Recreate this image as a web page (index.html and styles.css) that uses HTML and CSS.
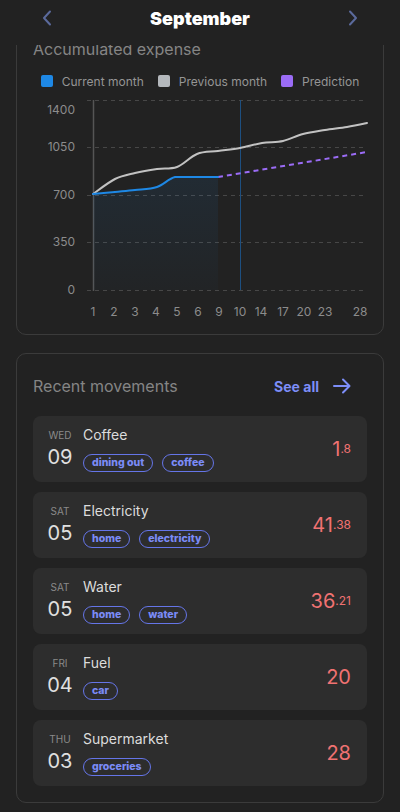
FILE: index.html
```html
<!DOCTYPE html>
<html lang="en">
  <head>
    <meta charset="UTF-8" />
    <meta name="viewport" content="width=device-width, initial-scale=1.0" />
    <title>Expenses - September</title>
    <link rel="stylesheet" href="styles.css">
  </head>
  <body>
    <header class="month-bar">
      <button class="month-bar__nav" aria-label="Previous month">
        <svg width="14" height="16" viewBox="0 0 14 16"><path d="M10 1.5 L4 8 L10 14.5" fill="none" stroke="currentColor" stroke-width="2" stroke-linecap="round" stroke-linejoin="round"/></svg>
      </button>
      <h1 class="month-bar__title">September</h1>
      <button class="month-bar__nav" aria-label="Next month">
        <svg width="14" height="16" viewBox="0 0 14 16"><path d="M4 1.5 L10 8 L4 14.5" fill="none" stroke="currentColor" stroke-width="2" stroke-linecap="round" stroke-linejoin="round"/></svg>
      </button>
    </header>

    <main class="content">
      <section class="card chart-card">
        <h2 class="card__title">Accumulated expense</h2>
        <ul class="legend">
          <li class="legend__item"><span class="legend__box legend__box--current"></span>Current month</li>
          <li class="legend__item"><span class="legend__box legend__box--previous"></span>Previous month</li>
          <li class="legend__item"><span class="legend__box legend__box--prediction"></span>Prediction</li>
        </ul>
        <svg class="chart" width="334" height="227" viewBox="0 0 334 227">
          <defs>
            <linearGradient id="fillCurrent" x1="0" y1="0" x2="0" y2="1">
              <stop offset="0" stop-color="#1e88e5" stop-opacity="0.09" />
              <stop offset="1" stop-color="#1e88e5" stop-opacity="0.02" />
            </linearGradient>
          </defs>
          <!-- grid -->
          <g stroke="#474747" stroke-width="1" stroke-dasharray="4 4">
            <line x1="54" y1="5.5" x2="334" y2="5.5" />
            <line x1="54" y1="52.5" x2="334" y2="52.5" />
            <line x1="54" y1="100.5" x2="334" y2="100.5" />
            <line x1="54" y1="147.5" x2="334" y2="147.5" />
            <line x1="54" y1="195.5" x2="334" y2="195.5" />
          </g>
          <line x1="60.5" y1="5" x2="60.5" y2="196" stroke="#555" stroke-width="1.5" />
          <line x1="207.5" y1="5" x2="207.5" y2="195" stroke="#1d4f80" stroke-width="1" />

          <g class="chart__ylabels" text-anchor="end">
            <text x="42" y="19">1400</text>
            <text x="42" y="56">1050</text>
            <text x="42" y="104">700</text>
            <text x="42" y="151">350</text>
            <text x="42" y="199">0</text>
          </g>
          <g class="chart__xlabels" text-anchor="middle">
            <text x="60" y="221">1</text>
            <text x="81" y="221">2</text>
            <text x="102" y="221">3</text>
            <text x="123" y="221">4</text>
            <text x="144" y="221">5</text>
            <text x="165" y="221">6</text>
            <text x="186" y="221">9</text>
            <text x="207" y="221">10</text>
            <text x="228" y="221">14</text>
            <text x="250" y="221">17</text>
            <text x="271" y="221">20</text>
            <text x="292" y="221">23</text>
            <text x="327" y="221">28</text>
          </g>

          <path d="M60 99 C63.7 98.7 75 97.7 82 97 C89 96.3 95 95.8 102 95 C109 94.2 117.3 94.2 124 92 C130.7 89.8 135.3 83.7 142 82 C148.7 82 157 82 164 82 L185 82 L185 195 L60 195 Z" fill="url(#fillCurrent)" />

          <path d="M60 99 C63.7 96.5 75 87.5 82 84 C89 80.5 95 79.7 102 78 C109 76.3 117 75 124 74 C131 73 137.3 74.5 144 72 C150.7 69.5 157.2 61.7 164 59 C170.8 56.3 177.8 57 185 56 C192.2 55 199.7 54.3 207 53 C214.3 51.7 221.8 49.2 229 48 C236.2 46.8 243.2 47.5 250 46 C256.8 44.5 263 40.8 270 39 C277 37.2 284.7 36.2 292 35 C299.3 33.8 307 33.2 314 32 C321 30.8 330.7 28.7 334 28" fill="none" stroke="#c2c2c2" stroke-width="2" stroke-linecap="round" />

          <path d="M185 82 L334 57" fill="none" stroke="#9b6cf6" stroke-width="2" stroke-dasharray="5 4" />

          <path d="M60 99 C63.7 98.7 75 97.7 82 97 C89 96.3 95 95.8 102 95 C109 94.2 117.3 94.2 124 92 C130.7 89.8 135.3 83.7 142 82 C148.7 82 157 82 164 82 L185 82" fill="none" stroke="#1e88e5" stroke-width="2" stroke-linecap="round" />
        </svg>
      </section>

      <section class="card movements">
        <div class="movements__head">
          <h2 class="card__title">Recent movements</h2>
          <a class="see-all" href="#">See all
            <svg width="18" height="16" viewBox="0 0 18 16"><path d="M1 8 H16 M10 1.5 L16.5 8 L10 14.5" fill="none" stroke="currentColor" stroke-width="2" stroke-linecap="round" stroke-linejoin="round"/></svg>
          </a>
        </div>

        <ul class="movements__list">
          <li class="movement">
            <div class="movement__date"><span class="movement__day">WED</span><span class="movement__num">09</span></div>
            <div class="movement__info">
              <p class="movement__name">Coffee</p>
              <div class="movement__tags"><span class="tag">dining out</span><span class="tag">coffee</span></div>
            </div>
            <p class="movement__amount">1<small>.8</small></p>
          </li>
          <li class="movement">
            <div class="movement__date"><span class="movement__day">SAT</span><span class="movement__num">05</span></div>
            <div class="movement__info">
              <p class="movement__name">Electricity</p>
              <div class="movement__tags"><span class="tag">home</span><span class="tag">electricity</span></div>
            </div>
            <p class="movement__amount">41<small>.38</small></p>
          </li>
          <li class="movement">
            <div class="movement__date"><span class="movement__day">SAT</span><span class="movement__num">05</span></div>
            <div class="movement__info">
              <p class="movement__name">Water</p>
              <div class="movement__tags"><span class="tag">home</span><span class="tag">water</span></div>
            </div>
            <p class="movement__amount">36<small>.21</small></p>
          </li>
          <li class="movement">
            <div class="movement__date"><span class="movement__day">FRI</span><span class="movement__num">04</span></div>
            <div class="movement__info">
              <p class="movement__name">Fuel</p>
              <div class="movement__tags"><span class="tag">car</span></div>
            </div>
            <p class="movement__amount">20</p>
          </li>
          <li class="movement">
            <div class="movement__date"><span class="movement__day">THU</span><span class="movement__num">03</span></div>
            <div class="movement__info">
              <p class="movement__name">Supermarket</p>
              <div class="movement__tags"><span class="tag">groceries</span></div>
            </div>
            <p class="movement__amount">28</p>
          </li>
        </ul>
      </section>
    </main>
  </body>
</html>
```

FILE: styles.css
```css
* {
  margin: 0;
  padding: 0;
  box-sizing: border-box;
}

html,
body {
  height: 100%;
}

body {
  font-family: Inter, "Noto Sans", sans-serif;
  background-color: #222;
  color: #ddd;
  overflow: hidden;
}

ul {
  list-style: none;
}

/* month header */
.month-bar {
  height: 45px;
  padding: 0 40px 9px;
  display: flex;
  align-items: center;
  justify-content: space-between;
  background-color: #222;
  position: relative;
  z-index: 1;
}

.month-bar__nav {
  border: none;
  background: none;
  color: #5b6a9c;
  display: flex;
  cursor: pointer;
}

.month-bar__title {
  font-size: 18px;
  font-weight: 900;
  color: #fff;
}

/* scrolled area */
.content {
  height: calc(100% - 45px);
  overflow: hidden;
}

.card {
  margin: 0 16px;
  border: 1px solid #3b3b3b;
  border-radius: 10px;
  padding: 0 16px;
}

.card__title {
  font-size: 16px;
  font-weight: 400;
  line-height: 20px;
  color: #858585;
}

.chart-card {
  margin-top: -23px;
  padding-top: 16px;
  padding-bottom: 12px;
}

.legend {
  margin-top: 15px;
  display: flex;
  justify-content: center;
  gap: 14px;
  height: 14px;
}

.legend__item {
  display: flex;
  align-items: center;
  gap: 9px;
  font-size: 12px;
  color: #959595;
  white-space: nowrap;
}

.legend__box {
  width: 12px;
  height: 12px;
  border-radius: 2px;
}

.legend__box--current {
  background-color: #1e88e5;
}

.legend__box--previous {
  background-color: #b4b8bc;
}

.legend__box--prediction {
  background-color: #9b6cf6;
}

.chart {
  display: block;
  margin-top: 7px;
  overflow: visible;
}

.chart text {
  font-family: Inter, "Noto Sans", sans-serif;
  font-size: 12px;
  fill: #8c8c8c;
}

/* recent movements */
.movements {
  margin-top: 18px;
  padding-top: 22px;
  padding-bottom: 16px;
}

.movements__head {
  display: flex;
  align-items: center;
  justify-content: space-between;
  height: 20px;
  margin-bottom: 20px;
}

.see-all {
  display: flex;
  align-items: center;
  gap: 14px;
  padding-right: 16px;
  font-size: 14px;
  font-weight: 700;
  color: #7d8ef8;
  text-decoration: none;
}

.movements__list {
  display: flex;
  flex-direction: column;
  gap: 10px;
}

.movement {
  height: 66px;
  display: flex;
  align-items: center;
  padding: 0 16px 0 14px;
  background-color: #2d2d2d;
  border-radius: 8px;
}

.movement__date {
  width: 26px;
  margin-right: 10px;
  display: flex;
  flex-direction: column;
  align-items: center;
  gap: 4px;
}

.movement__day {
  font-size: 10px;
  line-height: 12px;
  color: #8a8a8a;
}

.movement__num {
  font-size: 20px;
  line-height: 24px;
  color: #e0e0e0;
}

.movement__info {
  flex: 1;
}

.movement__name {
  font-size: 14px;
  line-height: 18px;
  color: #dcdcdc;
}

.movement__tags {
  display: flex;
  gap: 9px;
  margin-top: 10px;
}

.tag {
  height: 18px;
  line-height: 16px;
  padding: 0 8px;
  border: 1px solid #6575e8;
  border-radius: 9px;
  font-size: 10.5px;
  font-weight: 800;
  color: #7b8bf6;
}

.movement__amount {
  font-size: 20px;
  color: #f07272;
}

.movement__amount small {
  font-size: 12px;
  vertical-align: 3px;
}
```
